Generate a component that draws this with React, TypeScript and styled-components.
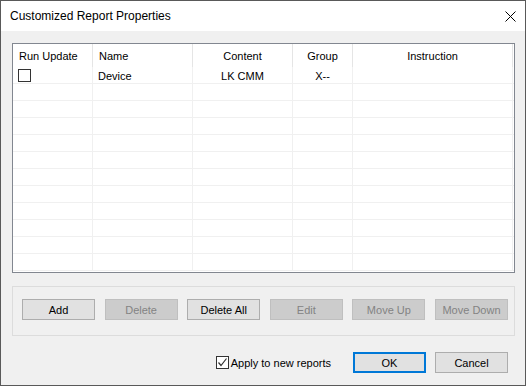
import React from "react"
import styled, {createGlobalStyle} from "styled-components"

const GlobalStyle = createGlobalStyle`
    html, body {
        margin: 0;
        padding: 0;
        background: #ffffff;
    }
`

type Column = { title: string; width: number; align: "left" | "center" }

const columns: Column[] = [
    {title: "Run Update", width: 80, align: "left"},
    {title: "Name", width: 100, align: "left"},
    {title: "Content", width: 100, align: "center"},
    {title: "Group", width: 60, align: "center"},
    {title: "Instruction", width: 160, align: "center"},
]

const gridCols = columns.map(c => `${c.width}px`).join(" ")

const EMPTY_ROWS = 11

export default function App()
{
    return (
        <>
            <GlobalStyle/>
            <Window>
                <TitleBar>
                    <span>Customized Report Properties</span>
                    <CloseIcon width="11" height="11" viewBox="0 0 11 11">
                        <path d="M0.5 0.5 L10.5 10.5 M10.5 0.5 L0.5 10.5" stroke="#000" strokeWidth="1"/>
                    </CloseIcon>
                </TitleBar>

                <Client>
                    <ListView>
                        <HeaderRow>
                            {columns.map(c => (
                                <HeaderCell key={c.title} $align={c.align}>{c.title}</HeaderCell>
                            ))}
                        </HeaderRow>

                        <Row>
                            <Cell $align="left"><Box/></Cell>
                            <Cell $align="left"><CellText>Device</CellText></Cell>
                            <Cell $align="center"><CellText>LK CMM</CellText></Cell>
                            <Cell $align="center"><CellText>X--</CellText></Cell>
                            <Cell $align="center"></Cell>
                        </Row>

                        {Array.from({length: EMPTY_ROWS}).map((_, i) => (
                            <Row key={i}>
                                {columns.map(c => <Cell key={c.title} $align={c.align}/>)}
                            </Row>
                        ))}
                    </ListView>

                    <GroupBox>
                        <Button>Add</Button>
                        <Button disabled>Delete</Button>
                        <Button>Delete All</Button>
                        <Button disabled>Edit</Button>
                        <Button disabled>Move Up</Button>
                        <Button disabled>Move Down</Button>
                    </GroupBox>

                    <Footer>
                        <CheckLabel>
                            <Box>
                                <svg width="11" height="11" viewBox="0 0 11 11">
                                    <path d="M1.5 5.5 L4 8.5 L9.5 1.5" stroke="#333" strokeWidth="1.2" fill="none"/>
                                </svg>
                            </Box>
                            <span>Apply to new reports</span>
                        </CheckLabel>
                        <Button $default>OK</Button>
                        <Button>Cancel</Button>
                    </Footer>
                </Client>
            </Window>
        </>
    )
}

const Window = styled.div`
    width: 526px;
    height: 386px;
    box-sizing: border-box;
    border: 1px solid #595959;
    background: #f0f0f0;
    display: flex;
    flex-direction: column;
    font-family: "Liberation Sans", Arial, sans-serif;
    font-size: 11px;
    color: #000;
`

const TitleBar = styled.div`
    height: 30px;
    flex-shrink: 0;
    background: #ffffff;
    display: flex;
    align-items: center;
    justify-content: space-between;
    padding: 0 9px 0 9px;
    font-size: 12px;
`

const CloseIcon = styled.svg`
    display: block;
`

const Client = styled.div`
    flex: 1;
    display: flex;
    flex-direction: column;
    padding: 12px 10px 0 11px;
`

const ListView = styled.div`
    height: 230px;
    box-sizing: border-box;
    border: 1px solid #828790;
    background: #ffffff;
    overflow: hidden;
`

const HeaderRow = styled.div`
    display: grid;
    grid-template-columns: ${gridCols};
    height: 23px;
`

const HeaderCell = styled.div<{ $align: "left" | "center" }>`
    display: flex;
    align-items: center;
    justify-content: ${p => p.$align === "left" ? "flex-start" : "center"};
    padding: 0 6px;
    border-right: 1px solid #e5e5e5;
    white-space: nowrap;
`

const Row = styled.div`
    display: grid;
    grid-template-columns: ${gridCols};
    height: 17px;
    box-sizing: border-box;
    border-bottom: 1px solid #f0f0f0;
`

const Cell = styled.div<{ $align: "left" | "center" }>`
    display: flex;
    align-items: center;
    justify-content: ${p => p.$align === "left" ? "flex-start" : "center"};
    padding: 0 5px;
    border-right: 1px solid #f0f0f0;
    white-space: nowrap;
`

const CellText = styled.span`
    padding-top: 2px;
`

const Box = styled.span`
    width: 13px;
    height: 13px;
    box-sizing: border-box;
    border: 1px solid #333333;
    background: #ffffff;
    display: inline-flex;
    align-items: center;
    justify-content: center;
    flex-shrink: 0;
`

const GroupBox = styled.div`
    margin-top: 13px;
    height: 50px;
    box-sizing: border-box;
    border: 1px solid #dcdcdc;
    display: flex;
    justify-content: space-between;
    align-items: flex-start;
    padding: 12px 6px 0 9px;
`

const Button = styled.button<{ $default?: boolean }>`
    width: 73px;
    height: 21px;
    box-sizing: border-box;
    margin: 0;
    padding: 0;
    font-family: "Liberation Sans", Arial, sans-serif;
    font-size: 11px;
    font-weight: normal;
    color: #000;
    background: #e1e1e1;
    border: ${p => p.$default ? "2px solid #0078d7" : "1px solid #adadad"};

    &:disabled {
        background: #cccccc;
        border-color: #bfbfbf;
        color: #838383;
    }
`

const Footer = styled.div`
    margin-top: 16px;
    display: flex;
    align-items: center;
    justify-content: flex-end;
    gap: 9px;
    padding-right: 7px;
`

const CheckLabel = styled.label`
    display: flex;
    align-items: center;
    gap: 2px;
    margin-right: 13px;
`
